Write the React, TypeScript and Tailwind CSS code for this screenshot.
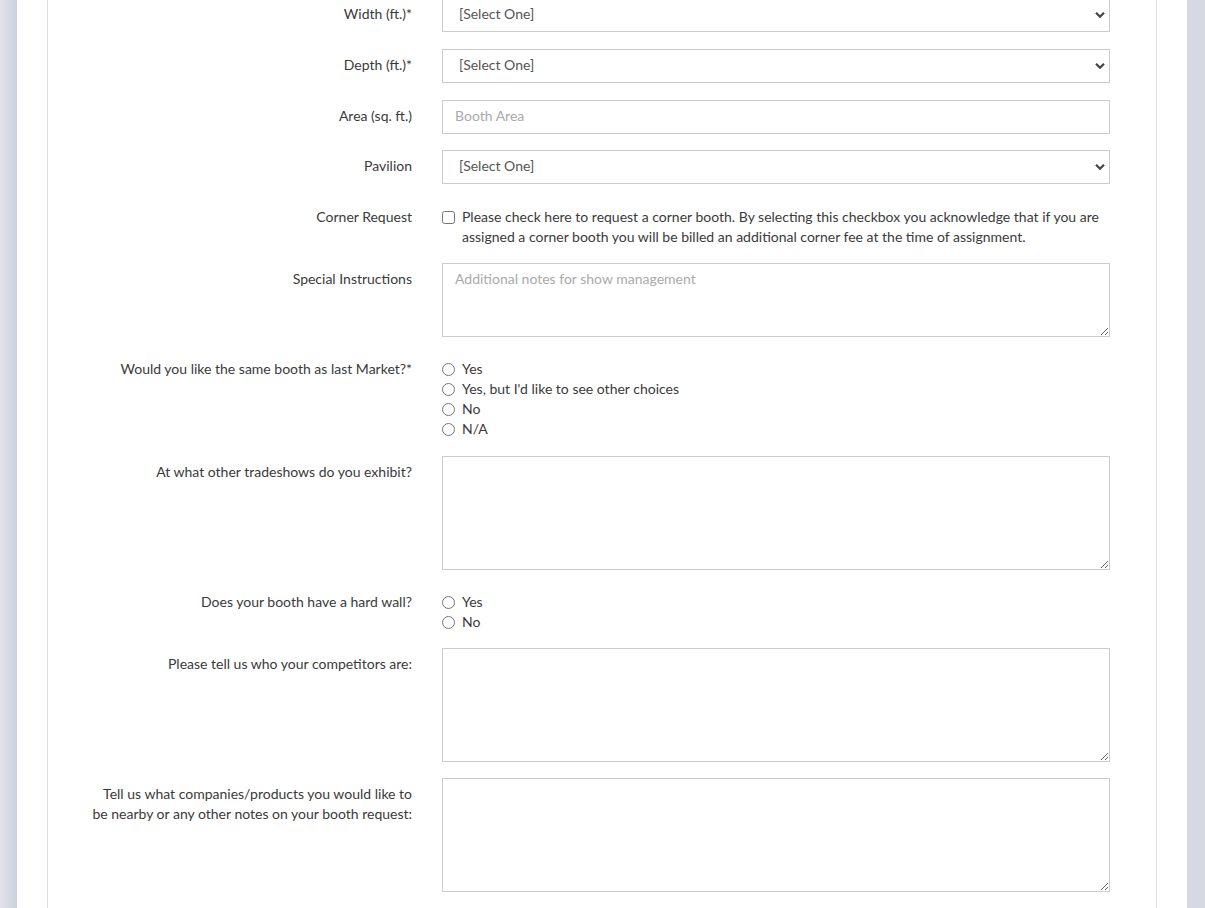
import React from "react";

const font = { fontFamily: "Lato, 'Open Sans', sans-serif" };

function Chevron() {
  return (
    <svg
      className="pointer-events-none absolute right-[5px] top-1/2 -translate-y-1/2"
      width="10"
      height="7"
      viewBox="0 0 10 7"
    >
      <path d="M1 1.2 L5 5.2 L9 1.2" fill="none" stroke="#444" strokeWidth="2.2" />
    </svg>
  );
}

function SelectBox() {
  return (
    <div className="relative w-[668px] h-[34px]">
      <select className="appearance-none w-full h-full border border-[#ccc] bg-white pl-[16px] pr-8 pb-[3px] text-[14px] text-[#555] outline-none">
        <option>[Select One]</option>
      </select>
      <Chevron />
    </div>
  );
}

function Label({ children }: { children: React.ReactNode }) {
  return (
    <div className="pt-[6px] text-right text-[14px] leading-[20px] text-[#3a3a3a]">
      {children}
    </div>
  );
}

function Row({
  mt,
  label,
  children,
}: {
  mt: string;
  label: React.ReactNode;
  children: React.ReactNode;
}) {
  return (
    <div className={`grid grid-cols-[364px_668px] gap-x-[30px] ${mt}`}>
      <Label>{label}</Label>
      <div>{children}</div>
    </div>
  );
}

function Area({ h, placeholder }: { h: string; placeholder?: string }) {
  return (
    <textarea
      placeholder={placeholder}
      className={`block w-[668px] ${h} border border-[#ccc] bg-white px-[12px] pt-[5px] pb-[6px] text-[14px] leading-[20px] text-[#555] placeholder:text-[#aaa] outline-none`}
    />
  );
}

function Radios({ items }: { items: string[] }) {
  return (
    <div className="pt-[6px]">
      {items.map((t) => (
        <label key={t} className="flex items-center gap-[7px] h-[20px] text-[14px] text-[#3a3a3a]">
          <input type="radio" name={items.join("")} className="w-[13px] h-[13px] m-0" />
          <span className="-mt-[1px]">{t}</span>
        </label>
      ))}
    </div>
  );
}

export default function App() {
  return (
    <div
      className="min-h-[908px] bg-[#d6d9e2] flex justify-center overflow-hidden"
      style={font}
    >
      <div className="w-[17px] shrink-0 bg-gradient-to-r from-[#e0e3ea] to-[#cdd1db]" />
      <div className="w-[1170px] shrink-0 bg-white px-[30px]">
        <div className="border-x border-[#ddd] min-h-[912px] -mt-[2px] pb-[20px]">
          <Row mt="mt-0" label="Width (ft.)*">
            <SelectBox />
          </Row>
          <Row mt="mt-[17px]" label="Depth (ft.)*">
            <SelectBox />
          </Row>
          <Row mt="mt-[17px]" label="Area (sq. ft.)">
            <input
              placeholder="Booth Area"
              className="block w-[668px] h-[34px] border border-[#ccc] bg-white px-[12px] pb-[3px] text-[14px] text-[#555] placeholder:text-[#aaa] outline-none"
            />
          </Row>
          <Row mt="mt-[16px]" label="Pavilion">
            <SelectBox />
          </Row>
          <Row mt="mt-[17px]" label="Corner Request">
            <div className="pt-[6px] flex gap-[7px] text-[14px] leading-[20px] text-[#3a3a3a]">
              <input type="checkbox" className="w-[13px] h-[13px] mt-[4px] shrink-0" />
              <span>
                Please check here to request a corner booth. By selecting this checkbox you acknowledge that if you are assigned a corner booth you will be billed an additional corner fee at the time of assignment.
              </span>
            </div>
          </Row>
          <Row mt="mt-[16px]" label="Special Instructions">
            <Area h="h-[74px]" placeholder="Additional notes for show management" />
          </Row>
          <Row mt="mt-[16px]" label="Would you like the same booth as last Market?*">
            <Radios items={["Yes", "Yes, but I'd like to see other choices", "No", "N/A"]} />
          </Row>
          <Row mt="mt-[17px]" label="At what other tradeshows do you exhibit?">
            <Area h="h-[114px]" />
          </Row>
          <Row mt="mt-[16px]" label="Does your booth have a hard wall?">
            <Radios items={["Yes", "No"]} />
          </Row>
          <Row mt="mt-[16px]" label="Please tell us who your competitors are:">
            <Area h="h-[114px]" />
          </Row>
          <Row
            mt="mt-[16px]"
            label={
              <>
                Tell us what companies/products you would like to
                <br />
                be nearby or any other notes on your booth request:
              </>
            }
          >
            <Area h="h-[114px]" />
          </Row>
        </div>
      </div>
      <div className="w-[18px] shrink-0 bg-[#d6d9e2]" />
    </div>
  );
}
